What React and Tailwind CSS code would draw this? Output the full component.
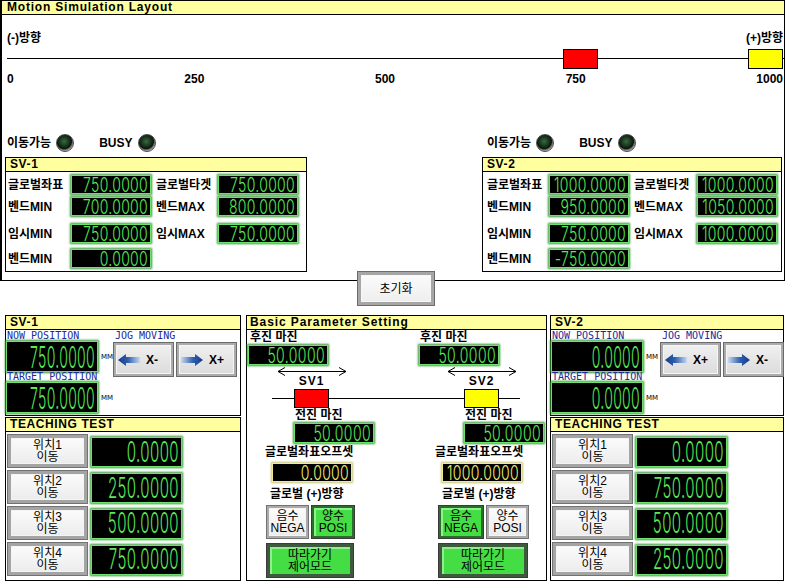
import React from "react";

function Lcd({ value, box, digits, yellow = false }) {
  return (
    <div
      className={`flex shrink-0 items-center justify-end bg-black pr-[2px] ${
        yellow
          ? "border border-[#f3ea8a] shadow-[0_0_2px_1px_#c9c070]"
          : "border border-[#6ee06e] shadow-[0_0_2px_1px_#2f9a2f]"
      } ${box}`}
    >
      <span
        className={`inline-block origin-center whitespace-nowrap font-['Inter',sans-serif] font-light leading-[0.8] ${
          yellow ? "text-[#f6ee72]" : "text-[#58ea58]"
        } ${digits}`}
      >
        {value}
      </span>
    </div>
  );
}

function Led() {
  return (
    <div className="h-[18px] w-[18px] shrink-0 rounded-full border border-[#4a4a4a] bg-[radial-gradient(circle_at_45%_40%,#3a6a3e_0%,#15301a_40%,#0a170c_56%,#5d5d5d_63%,#d4d4d4_78%,#8c8c8c_100%)]" />
  );
}

function Hdr({ children }) {
  return (
    <div className="h-[14px] shrink-0 border-b border-black bg-[#ffffa0] pl-[4px] text-[12px] font-bold leading-[13px] tracking-[0.6px]">
      {children}
    </div>
  );
}

function ArrowL() {
  return (
    <svg width="22" height="12" viewBox="0 0 22 12">
      <defs>
        <linearGradient id="al" x1="0" y1="0" x2="1" y2="0">
          <stop offset="0" stopColor="#163a86" />
          <stop offset="0.45" stopColor="#2f5fae" />
          <stop offset="1" stopColor="#c8d8f0" />
        </linearGradient>
      </defs>
      <polygon points="0,6 8,0 8,3 22,3 22,9 8,9 8,12" fill="url(#al)" />
    </svg>
  );
}

function ArrowR() {
  return (
    <svg width="22" height="12" viewBox="0 0 22 12">
      <defs>
        <linearGradient id="ar" x1="0" y1="0" x2="1" y2="0">
          <stop offset="0" stopColor="#c8d8f0" />
          <stop offset="0.55" stopColor="#2f5fae" />
          <stop offset="1" stopColor="#163a86" />
        </linearGradient>
      </defs>
      <polygon points="22,6 14,0 14,3 0,3 0,9 14,9 14,12" fill="url(#ar)" />
    </svg>
  );
}

function JogBtn({ dir, label }) {
  return (
    <div className="flex h-[35px] w-[61px] items-center gap-[6px] border border-[#6a6a6a] bg-linear-to-b from-[#f1f1f1] to-[#dadada] pl-[4px] shadow-[inset_0_0_0_2px_#ababab,inset_0_0_0_3px_#f6f6f6]">
      {dir === "left" ? <ArrowL /> : <ArrowR />}
      <span className="text-[12px] font-bold">{label}</span>
    </div>
  );
}

function WhiteBtn({ cls, children }) {
  return (
    <div
      className={`flex flex-col items-center justify-center border border-[#727272] bg-linear-to-b from-[#fdfdfd] to-[#eaeaea] text-[12px] leading-[12px] shadow-[inset_0_0_0_2px_#ababab,inset_0_0_0_3px_#f4f4f4] ${cls}`}
    >
      {children}
    </div>
  );
}

function GreenBtn({ cls, children }) {
  return (
    <div
      className={`flex flex-col items-center justify-center border border-[#3a3a3a] bg-[#44de44] text-[12px] leading-[12px] shadow-[inset_0_0_0_2px_#2b6e2b,inset_2px_2px_0_2px_#8cf28c] ${cls}`}
    >
      {children}
    </div>
  );
}

const blue = "font-['DejaVu_Sans_Mono',monospace] text-[10px] leading-[10px] text-[#1b2b9b]";

const SMALL = "text-[14px] scale-y-[1.4] tracking-[0.3px]";
const MID = "text-[14px] scale-y-[1.5] tracking-[0.4px]";
const TEACH = "text-[15px] scale-y-[1.9] tracking-[0.4px]";
const BIG = "text-[14px] scale-y-[2.15] tracking-[0.3px]";

function TopSv({ title, rows, lblW, lbl2W, pl, ledPl, boxW }) {
  const mts = ["mt-[3px]", "mt-[3px]", "mt-[8px]", "mt-[6px]"];
  return (
    <div className="flex flex-col">
      <div className={`mb-[5px] flex items-center ${ledPl}`}>
        <span className="text-[12px] font-bold leading-[14px]">이동가능</span>
        <div className="ml-[5px]">
          <Led />
        </div>
        <span className="ml-[25px] text-[12px] font-bold leading-[14px]">BUSY</span>
        <div className="ml-[5px]">
          <Led />
        </div>
      </div>
      <div className={`h-[115px] border border-black ${boxW}`}>
        <Hdr>{title}</Hdr>
        {rows.map((r, i) => (
          <div key={i} className={`flex h-[19px] items-center ${mts[i]}`}>
            <span className={`shrink-0 text-[12px] font-bold leading-[14px] ${lblW} ${pl}`}>{r[0]}</span>
            <Lcd value={r[1]} box="h-[19px] w-[80px]" digits={SMALL} />
            {r[2] && (
              <>
                <span className={`shrink-0 pl-[5px] text-[12px] font-bold leading-[14px] ${lbl2W}`}>{r[2]}</span>
                <Lcd value={r[3]} box="h-[19px] w-[80px]" digits={SMALL} />
              </>
            )}
          </div>
        ))}
      </div>
    </div>
  );
}

function SvPanel({ title, now, target, colW, jog }) {
  return (
    <div className="h-[101px] border border-black">
      <Hdr>{title}</Hdr>
      <div className="flex">
        <div className={`flex shrink-0 flex-col ${colW}`}>
          <div className={`ml-[1px] mt-[1px] h-[10px] ${blue}`}>NOW POSITION</div>
          <div className="flex items-center">
            <Lcd value={now} box="h-[31px] w-[92px]" digits={BIG} />
            <span className="ml-[3px] font-['DejaVu_Sans',sans-serif] text-[7px] leading-[8px]">MM</span>
          </div>
          <div className={`ml-[1px] h-[10px] ${blue}`}>TARGET POSITION</div>
          <div className="flex items-center">
            <Lcd value={target} box="h-[31px] w-[92px]" digits={BIG} />
            <span className="ml-[3px] font-['DejaVu_Sans',sans-serif] text-[7px] leading-[8px]">MM</span>
          </div>
        </div>
        <div className="flex flex-col">
          <div className={`ml-[2px] mt-[1px] h-[10px] ${blue}`}>JOG MOVING</div>
          <div className="mt-[1px] flex gap-[2px]">
            <JogBtn dir="left" label={jog[0]} />
            <JogBtn dir="right" label={jog[1]} />
          </div>
        </div>
      </div>
    </div>
  );
}

function TeachPanel({ values }) {
  return (
    <div className="mt-[1px] h-[164px] border border-black">
      <Hdr>TEACHING TEST</Hdr>
      <div className="mt-[2px] flex flex-col gap-[2px] pl-[1px]">
        {values.map((v, i) => (
          <div key={i} className="flex items-center">
            <WhiteBtn cls="h-[34px] w-[81px] shadow-[inset_0_0_0_3px_#a4a4a4,inset_0_0_0_4px_#f4f4f4]">
              <span>위치{i + 1}</span>
              <span>이동</span>
            </WhiteBtn>
            <div className="ml-[3px] mt-[2px]">
              <Lcd value={v} box="h-[30px] w-[91px]" digits={TEACH} />
            </div>
          </div>
        ))}
      </div>
    </div>
  );
}

function BasicCol({ cls, lcd2Ml, sv, boxColor, offset, dirMl, btnMl, negW, posW, negGreen }) {
  const lbl = "text-[12px] font-bold leading-[13px]";
  return (
    <div className={`flex flex-col ${cls}`}>
      <span className={`ml-[3px] mt-[1px] ${lbl}`}>후진 마진</span>
      <div className={`mt-[1px] ${lcd2Ml}`}>
        <Lcd value="50.0000" box="h-[20px] w-[80px]" digits={MID} />
      </div>
      <div className="ml-[30px] mt-[3px] h-[7px]">
        <svg width="70" height="9" viewBox="0 0 70 9" className="-mt-[1px] block">
          <path d="M1 4.5H69M8 0.5L1 4.5L8 8.5M62 0.5L69 4.5L62 8.5" stroke="#000" strokeWidth="1" fill="none" />
        </svg>
      </div>
      <div className={`ml-[47px] w-[35px] text-center ${lbl} tracking-[1px]`}>{sv}</div>
      <div className={`relative ml-[47px] mt-[1px] h-[19px] w-[35px] border border-black ${boxColor}`} />
      <span className={`ml-[48px] mt-[1px] ${lbl}`}>전진 마진</span>
      <div className="ml-[47px] mt-[1px]">
        <Lcd value="50.0000" box="h-[20px] w-[80px]" digits={MID} />
      </div>
      <span className={`ml-[18px] mt-[3px] ${lbl}`}>글로벌좌표오프셋</span>
      <div className="ml-[25px] mt-[4px]">
        <Lcd value={offset} yellow box="h-[19px] w-[80px]" digits={SMALL} />
      </div>
      <span className={`mt-[6px] ${dirMl} ${lbl}`}>글로벌 (+)방향</span>
      <div className={`mt-[4px] flex gap-[2px] ${btnMl}`}>
        {negGreen ? (
          <>
            <GreenBtn cls={`h-[34px] ${negW}`}>
              <span>음수</span>
              <span>NEGA</span>
            </GreenBtn>
            <WhiteBtn cls={`h-[34px] ${posW}`}>
              <span>양수</span>
              <span>POSI</span>
            </WhiteBtn>
          </>
        ) : (
          <>
            <WhiteBtn cls={`h-[34px] ${negW}`}>
              <span>음수</span>
              <span>NEGA</span>
            </WhiteBtn>
            <GreenBtn cls={`h-[34px] ${posW}`}>
              <span>양수</span>
              <span>POSI</span>
            </GreenBtn>
          </>
        )}
      </div>
      <div className={`mt-[4px] ${btnMl}`}>
        <GreenBtn cls={`h-[35px] ${negGreen ? "w-[90px]" : "w-[88px]"} border-[#2e2e2e] shadow-[inset_0_0_0_3px_#3d5a3d,inset_2px_2px_0_3px_#90f090]`}>
          <span>따라가기</span>
          <span>제어모드</span>
        </GreenBtn>
      </div>
    </div>
  );
}

export default function App() {
  const sv1 = [
    ["글로벌좌표", "750.0000", "글로벌타겟", "750.0000"],
    ["벤드MIN", "700.0000", "벤드MAX", "800.0000"],
    ["임시MIN", "750.0000", "임시MAX", "750.0000"],
    ["벤드MIN", "0.0000"],
  ];
  const sv2 = [
    ["글로벌좌표", "1000.0000", "글로벌타겟", "1000.0000"],
    ["벤드MIN", "950.0000", "벤드MAX", "1050.0000"],
    ["임시MIN", "750.0000", "임시MAX", "1000.0000"],
    ["벤드MIN", "-750.0000"],
  ];
  return (
    <div className="h-[582px] w-[785px] overflow-hidden bg-white font-['Liberation_Sans','Noto_Sans_CJK_KR',sans-serif] text-black">
      {/* Top panel */}
      <div className="flex h-[281px] w-[785px] flex-col border-y border-l-2 border-r border-black">
        <div className="h-[14px] shrink-0 border-b border-black bg-[#ffffa0] pl-[5px] text-[12px] font-bold leading-[13px] tracking-[0.8px]">
          Motion Simulation Layout
        </div>
        <div className="mt-[16px] flex justify-between pl-[5px] pr-[1px] text-[12px] font-bold leading-[14px]">
          <span>(-)방향</span>
          <span>(+)방향</span>
        </div>
        <div className="relative ml-[5px] mt-[4px] h-[20px]">
          <div className="absolute left-0 right-0 top-[9px] h-px bg-black" />
          <div className="absolute left-[556px] top-0 h-[20px] w-[35px] border border-black bg-[#ff0000]" />
          <div className="absolute left-[741px] top-0 h-[20px] w-[35px] border border-black bg-[#ffff00]" />
        </div>
        <div className="mt-[3px] flex justify-between pl-[5px] pr-[1px] text-[12px] font-bold leading-[14px]">
          <span>0</span>
          <span>250</span>
          <span>500</span>
          <span>750</span>
          <span>1000</span>
        </div>
        <div className="mt-auto flex items-end justify-between pb-[8px] pl-[3px] pr-[2px]">
          <TopSv title="SV-1" rows={sv1} lblW="w-[65px]" lbl2W="w-[67px]" pl="pl-[2px]" ledPl="pl-[2px]" boxW="w-[302px]" />
          <TopSv title="SV-2" rows={sv2} lblW="w-[66px]" lbl2W="w-[68px]" pl="pl-[4px]" ledPl="pl-[5px]" boxW="w-[300px]" />
        </div>
      </div>

      {/* Reset button over the border */}
      <div className="relative z-10 -mt-[10px] ml-[357px] flex h-[35px] w-[78px] items-center justify-center border border-[#6c6c6c] bg-linear-to-b from-[#fdfdfd] to-[#ececec] text-[12px] shadow-[inset_0_0_0_3px_#a6a6a6,inset_0_0_0_4px_#f7f7f7]">
        초기화
      </div>

      {/* Bottom section */}
      <div className="mt-[9px] flex pl-[5px]">
        <div className="flex w-[236px] flex-col">
          <SvPanel title="SV-1" now="750.0000" target="750.0000" colW="w-[107px]" jog={["X-", "X+"]} />
          <TeachPanel values={["0.0000", "250.0000", "500.0000", "750.0000"]} />
        </div>

        <div className="relative ml-[5px] h-[266px] w-[301px] border border-black">
          <div className="h-[14px] border-b border-black bg-[#ffffa0] pl-[3px] text-[12px] font-bold leading-[13px] tracking-[0.9px]">
            Basic Parameter Setting
          </div>
          <div className="absolute left-[25px] top-[82px] h-px w-[248px] bg-black" />
          <div className="flex">
            <BasicCol
              cls="w-[170px]"
              lcd2Ml="ml-[1px]"
              sv="SV1"
              boxColor="bg-[#ff0000]"
              offset="0.0000"
              dirMl="ml-[23px]"
              btnMl="ml-[19px]"
              negW="w-[43px]"
              posW="w-[44px]"
              negGreen={false}
            />
            <BasicCol
              cls="flex-1"
              lcd2Ml="ml-[2px]"
              sv="SV2"
              boxColor="bg-[#ffff00]"
              offset="1000.0000"
              dirMl="ml-[25px]"
              btnMl="ml-[21px]"
              negW="w-[46px]"
              posW="w-[43px]"
              negGreen={true}
            />
          </div>
        </div>

        <div className="ml-[3px] flex w-[234px] flex-col">
          <SvPanel title="SV-2" now="0.0000" target="0.0000" colW="w-[109px]" jog={["X+", "X-"]} />
          <TeachPanel values={["0.0000", "750.0000", "500.0000", "250.0000"]} />
        </div>
      </div>
    </div>
  );
}
